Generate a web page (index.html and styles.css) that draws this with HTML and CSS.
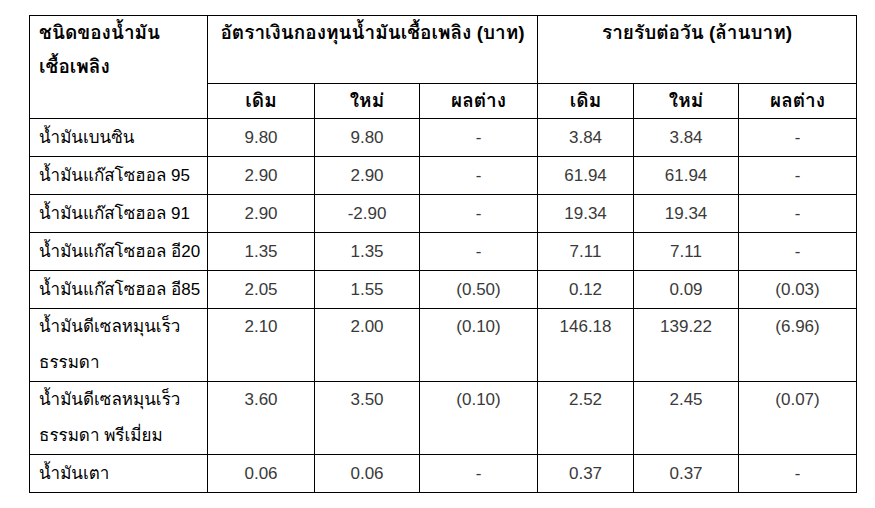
FILE: index.html
```html
<!DOCTYPE html>
<html lang="th">
<head>
<meta charset="utf-8">
<link rel="stylesheet" href="styles.css">
</head>
<body>
<table class="fund">
  <colgroup>
    <col class="c-name"><col class="c1"><col class="c2"><col class="c3"><col class="c4"><col class="c5"><col class="c6">
  </colgroup>
  <thead>
    <tr class="h1">
      <th rowspan="2" class="name">ชนิดของน้ำมัน<br>เชื้อเพลิง</th>
      <th colspan="3">อัตราเงินกองทุนน้ำมันเชื้อเพลิง (บาท)</th>
      <th colspan="3">รายรับต่อวัน (ล้านบาท)</th>
    </tr>
    <tr class="h2">
      <th>เดิม</th><th>ใหม่</th><th>ผลต่าง</th>
      <th>เดิม</th><th>ใหม่</th><th>ผลต่าง</th>
    </tr>
  </thead>
  <tbody>
    <tr><td class="name">น้ำมันเบนซิน</td><td>9.80</td><td>9.80</td><td>-</td><td>3.84</td><td>3.84</td><td>-</td></tr>
    <tr><td class="name">น้ำมันแก๊สโซฮอล 95</td><td>2.90</td><td>2.90</td><td>-</td><td>61.94</td><td>61.94</td><td>-</td></tr>
    <tr><td class="name">น้ำมันแก๊สโซฮอล 91</td><td>2.90</td><td>-2.90</td><td>-</td><td>19.34</td><td>19.34</td><td>-</td></tr>
    <tr><td class="name">น้ำมันแก๊สโซฮอล อี20</td><td>1.35</td><td>1.35</td><td>-</td><td>7.11</td><td>7.11</td><td>-</td></tr>
    <tr><td class="name">น้ำมันแก๊สโซฮอล อี85</td><td>2.05</td><td>1.55</td><td>(0.50)</td><td>0.12</td><td>0.09</td><td>(0.03)</td></tr>
    <tr class="tall"><td class="name">น้ำมันดีเซลหมุนเร็ว<br>ธรรมดา</td><td>2.10</td><td>2.00</td><td>(0.10)</td><td>146.18</td><td>139.22</td><td>(6.96)</td></tr>
    <tr class="tall"><td class="name">น้ำมันดีเซลหมุนเร็ว<br>ธรรมดา พรีเมี่ยม</td><td>3.60</td><td>3.50</td><td>(0.10)</td><td>2.52</td><td>2.45</td><td>(0.07)</td></tr>
    <tr><td class="name">น้ำมันเตา</td><td>0.06</td><td>0.06</td><td>-</td><td>0.37</td><td>0.37</td><td>-</td></tr>
  </tbody>
</table>
</body>
</html>
```
FILE: styles.css
```css
html, body {
  margin: 0;
  padding: 0;
  background: #fff;
}
body {
  padding: 15px 0 0 29px;
  font-family: "Liberation Sans", "Loma", "Noto Sans Thai Looped", sans-serif;
  color: #000;
}
.fund {
  border-collapse: collapse;
  table-layout: fixed;
  width: 828px;
}
.c-name { width: 178px; }
.c1 { width: 107px; }
.c2 { width: 105px; }
.c3 { width: 118px; }
.c4 { width: 96px; }
.c5 { width: 105px; }
.c6 { width: 118px; }
.fund th, .fund td {
  border: 1px solid #000;
  padding: 0;
  vertical-align: top;
  text-align: center;
}
.fund th {
  font-size: 19px;
  font-weight: bold;
  line-height: 34px;
  color: #000;
}
.fund td {
  font-size: 17px;
  line-height: 37px;
  color: #3a3a3a;
}
.fund .name {
  text-align: left;
  padding-left: 9px;
  color: #000;
}
.fund .tall td {
  line-height: 36px;
}
.h1 { height: 68px; }
.h2 { height: 34px; }
```
